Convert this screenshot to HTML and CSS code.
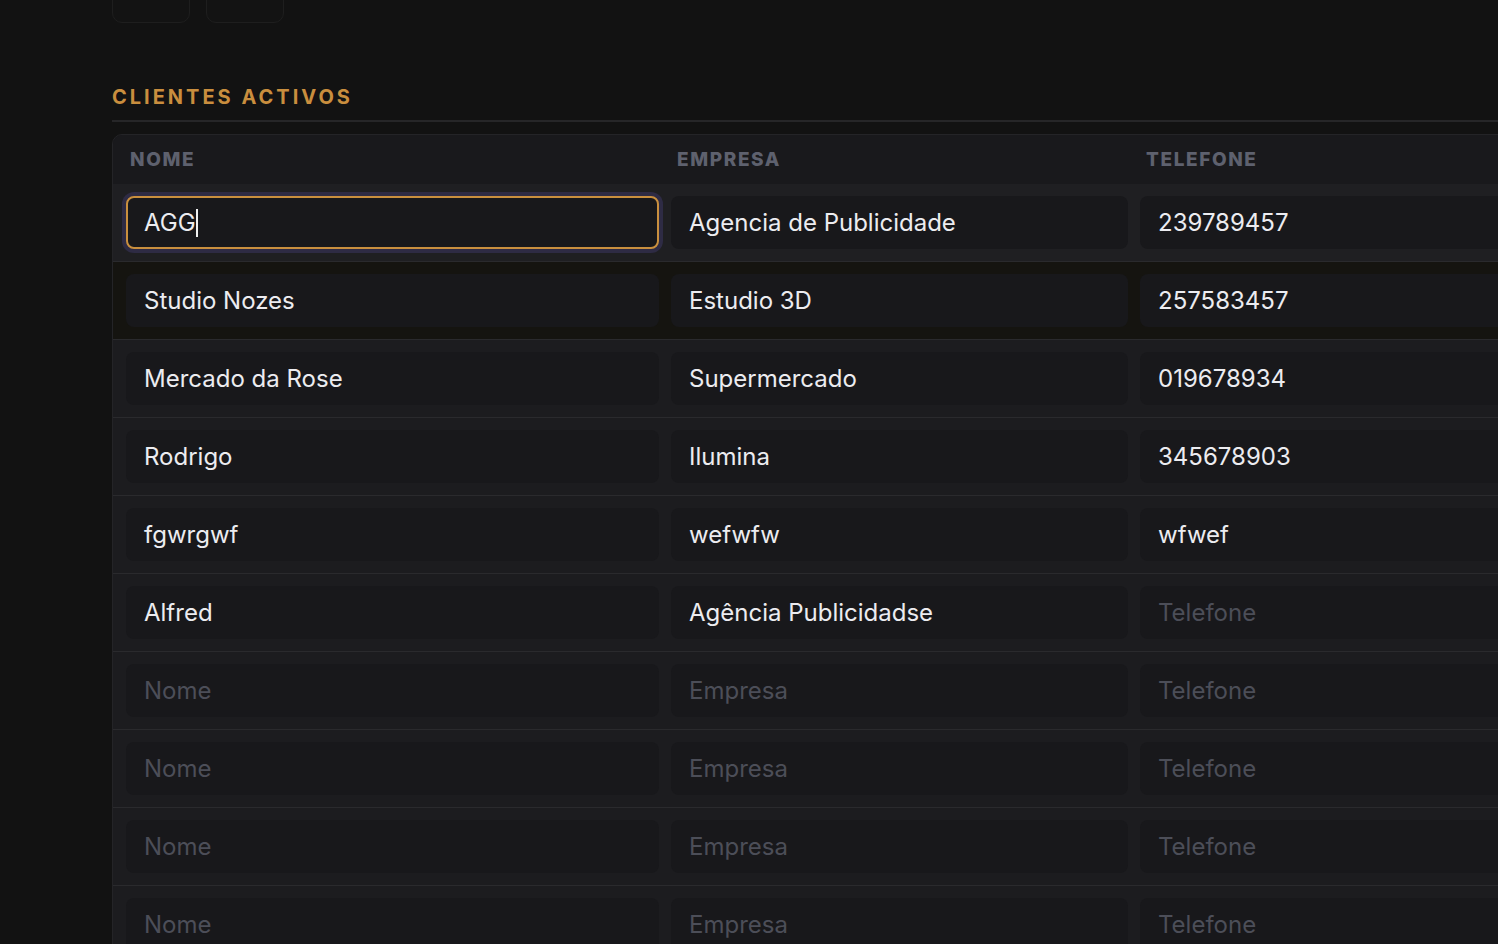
FILE: index.html
```html
<!DOCTYPE html>
<html lang="pt">
<head>
<meta charset="utf-8">
<title>Clientes activos</title>
<link rel="stylesheet" href="styles.css">
</head>
<body>
<main class="page">
  <div class="toolbar">
    <button class="tool" type="button"></button>
    <button class="tool" type="button"></button>
  </div>
  <section class="clients">
    <h2 class="section-title">CLIENTES ACTIVOS</h2>
    <div class="table">
      <div class="row head">
        <div class="th first">NOME</div>
        <div class="th">EMPRESA</div>
        <div class="th">TELEFONE</div>
      </div>
      <div class="row active">
        <div class="cell first"><div class="field focused"><span>AGG</span><span class="caret"></span></div></div>
        <div class="cell"><div class="field">Agencia de Publicidade</div></div>
        <div class="cell"><div class="field">239789457</div></div>
      </div>
      <div class="row hover">
        <div class="cell first"><div class="field">Studio Nozes</div></div>
        <div class="cell"><div class="field">Estudio 3D</div></div>
        <div class="cell"><div class="field">257583457</div></div>
      </div>
      <div class="row">
        <div class="cell first"><div class="field">Mercado da Rose</div></div>
        <div class="cell"><div class="field">Supermercado</div></div>
        <div class="cell"><div class="field">019678934</div></div>
      </div>
      <div class="row">
        <div class="cell first"><div class="field">Rodrigo</div></div>
        <div class="cell"><div class="field">Ilumina</div></div>
        <div class="cell"><div class="field">345678903</div></div>
      </div>
      <div class="row">
        <div class="cell first"><div class="field">fgwrgwf</div></div>
        <div class="cell"><div class="field">wefwfw</div></div>
        <div class="cell"><div class="field">wfwef</div></div>
      </div>
      <div class="row">
        <div class="cell first"><div class="field">Alfred</div></div>
        <div class="cell"><div class="field">Agência Publicidadse</div></div>
        <div class="cell"><div class="field placeholder">Telefone</div></div>
      </div>
      <div class="row">
        <div class="cell first"><div class="field placeholder">Nome</div></div>
        <div class="cell"><div class="field placeholder">Empresa</div></div>
        <div class="cell"><div class="field placeholder">Telefone</div></div>
      </div>
      <div class="row">
        <div class="cell first"><div class="field placeholder">Nome</div></div>
        <div class="cell"><div class="field placeholder">Empresa</div></div>
        <div class="cell"><div class="field placeholder">Telefone</div></div>
      </div>
      <div class="row">
        <div class="cell first"><div class="field placeholder">Nome</div></div>
        <div class="cell"><div class="field placeholder">Empresa</div></div>
        <div class="cell"><div class="field placeholder">Telefone</div></div>
      </div>
      <div class="row">
        <div class="cell first"><div class="field placeholder">Nome</div></div>
        <div class="cell"><div class="field placeholder">Empresa</div></div>
        <div class="cell"><div class="field placeholder">Telefone</div></div>
      </div>
    </div>
  </section>
</main>
</body>
</html>
```
FILE: styles.css
```css
html, body {
  margin: 0;
  background: #121212;
  overflow: hidden;
}
body {
  font-family: Inter, "Liberation Sans", sans-serif;
  color: #ececf0;
}
.page {
  padding-left: 112px;
  width: 1700px;
}
.toolbar {
  display: flex;
  gap: 16px;
  margin-top: -22px;
}
.tool {
  width: 78px;
  height: 45px;
  background: #131313;
  border: 1px solid #1e1e1e;
  border-radius: 10px;
  padding: 0;
}
.clients {
  margin-top: 62px;
}
.section-title {
  margin: 0;
  font-size: 20px;
  line-height: 24px;
  font-weight: 700;
  letter-spacing: 3px;
  color: #c98e3e;
  padding-bottom: 11px;
  border-bottom: 2px solid #262628;
}
.table {
  margin-top: 12px;
  background: #19191c;
  border: 1px solid #242427;
  border-radius: 10px;
  overflow: hidden;
}
.row {
  display: grid;
  grid-template-columns: 552px 469px 1fr;
  background: #1c1c1f;
  border-bottom: 1px solid #2a2a2d;
}
.row.head {
  height: 49px;
  align-items: center;
  background: #19191c;
  border-bottom: none;
}
.row.active {
  background: #1f1f22;
}
.row.hover {
  background: #151410;
}
.th {
  padding-left: 12px;
  font-size: 19px;
  font-weight: 800;
  letter-spacing: 1.6px;
  color: #5e616e;
}
.th.first {
  padding-left: 17px;
}
.cell {
  padding: 12px 6px;
}
.cell.first {
  padding-left: 13px;
}
.field {
  box-sizing: border-box;
  height: 53px;
  display: flex;
  align-items: center;
  padding: 0 17px;
  border: 1px solid transparent;
  border-radius: 8px;
  background: #18181b;
  font-size: 24px;
  color: #ececf0;
  white-space: nowrap;
}
.field.placeholder {
  color: #4c4e58;
}
.field.focused {
  border: 2px solid #c98f3e;
  padding: 0 16px;
  box-shadow: 0 0 0 4px #2e2b44;
}
.caret {
  display: inline-block;
  width: 2px;
  height: 28px;
  margin-left: 0;
  background: #f0f0f0;
}
```
